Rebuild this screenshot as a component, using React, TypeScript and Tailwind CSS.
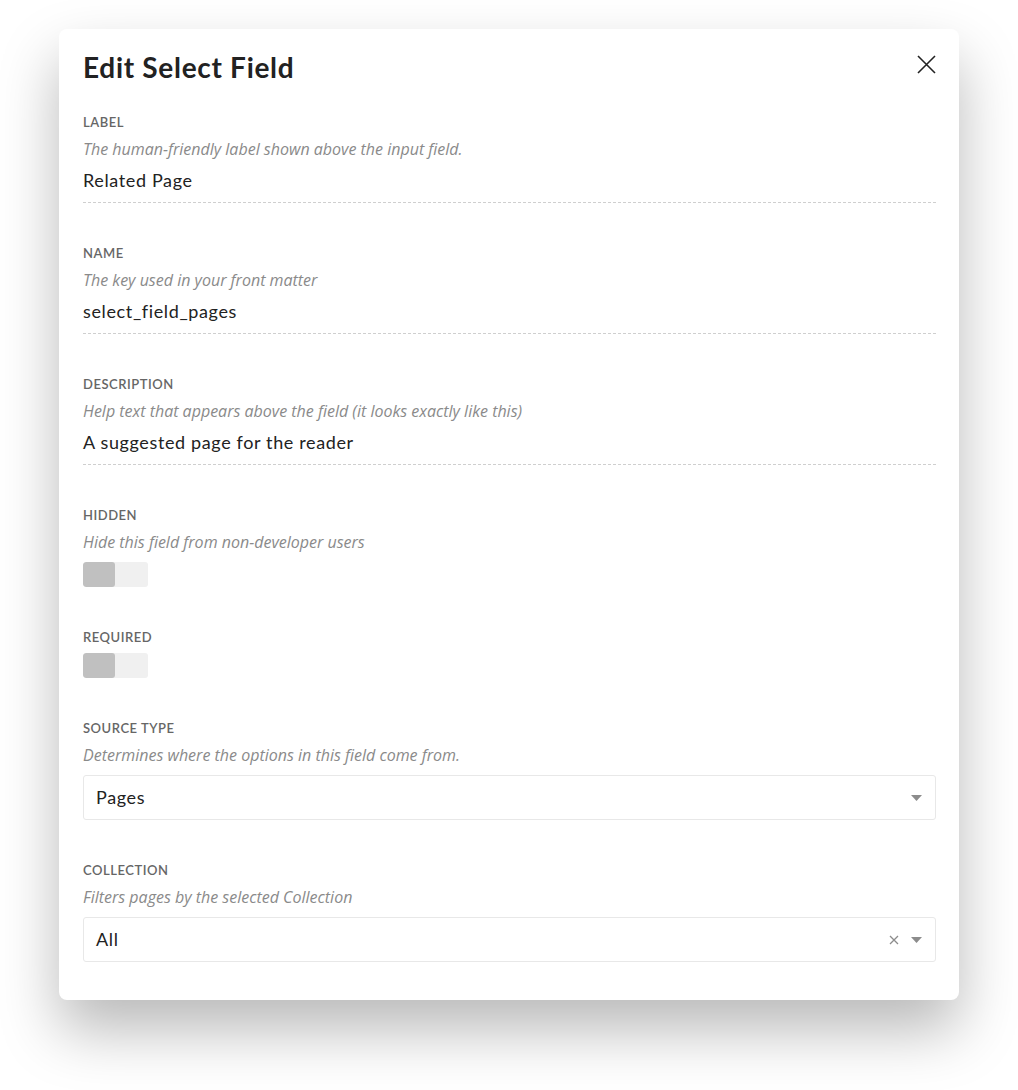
const font = { fontFamily: 'Lato, "Noto Sans", sans-serif' };
const hintFont = { fontFamily: '"Open Sans", "Noto Sans", sans-serif' };

function Label({ children }: { children: string }) {
  return <div className="text-[13px] leading-4 font-semibold tracking-[0.04em] text-[#666]">{children}</div>;
}

function Hint({ children }: { children: string }) {
  return (
    <div className="mt-[9px] text-[16px] leading-5 italic text-[#8a8a8a]" style={hintFont}>
      {children}
    </div>
  );
}

function TextField({ label, hint, value }: { label: string; hint: string; value: string }) {
  return (
    <div className="mt-[42px] first:mt-0">
      <Label>{label}</Label>
      <Hint>{hint}</Hint>
      <div className="mt-[9px] pb-[10px] border-b border-dashed border-[#cfcfcf] text-[18px] leading-6 tracking-[0.035em] text-[#222]">
        {value}
      </div>
    </div>
  );
}

function Toggle() {
  return (
    <div className="flex w-[65px] h-[25px] rounded-[3px] bg-[#f0f0f0] overflow-hidden">
      <div className="w-[32px] h-full rounded-[3px] bg-[#c0c0c0]" />
    </div>
  );
}

function Caret() {
  return (
    <svg width="11" height="6" viewBox="0 0 11 6">
      <path d="M0 0h11L5.5 6z" fill="#8c8c8c" />
    </svg>
  );
}

function Select({ value, clearable }: { value: string; clearable?: boolean }) {
  return (
    <div className="mt-[10px] h-[45px] flex items-center border border-[#e8e8e8] rounded-[3px] pl-3 pr-[13px]">
      <span className="flex-1 text-[18px] tracking-[0.035em] text-[#222]">{value}</span>
      {clearable && (
        <svg width="10" height="10" viewBox="0 0 10 10" className="mr-[12px]">
          <path d="M1 1l8 8M9 1l-8 8" stroke="#8c8c8c" strokeWidth="1.3" />
        </svg>
      )}
      <Caret />
    </div>
  );
}

export default function App() {
  return (
    <div className="min-h-[1090px] bg-white pt-[29px]" style={font}>
      <div className="mx-auto w-[900px] bg-white rounded-[8px] shadow-[0_30px_60px_rgba(0,0,0,0.28)] pl-6 pr-[23px] pt-5 pb-[38px]">
        <div className="flex items-start justify-between">
          <h1 className="text-[28px] leading-9 font-bold tracking-[0.025em] text-[#222]">Edit Select Field</h1>
          <button className="mt-[6px] w-[19px] h-[19px] flex items-center justify-center">
            <svg width="19" height="19" viewBox="0 0 19 19">
              <path d="M1 1l17 17M18 1L1 18" stroke="#222" strokeWidth="1.6" />
            </svg>
          </button>
        </div>

        <div className="mt-[29px]">
          <TextField label="LABEL" hint="The human-friendly label shown above the input field." value="Related Page" />
          <TextField label="NAME" hint="The key used in your front matter" value="select_field_pages" />
          <TextField
            label="DESCRIPTION"
            hint="Help text that appears above the field (it looks exactly like this)"
            value="A suggested page for the reader"
          />

          <div className="mt-[42px]">
            <Label>HIDDEN</Label>
            <Hint>Hide this field from non-developer users</Hint>
            <div className="mt-[10px]">
              <Toggle />
            </div>
          </div>

          <div className="mt-[42px]">
            <Label>REQUIRED</Label>
            <div className="mt-[8px]">
              <Toggle />
            </div>
          </div>

          <div className="mt-[42px]">
            <Label>SOURCE TYPE</Label>
            <Hint>Determines where the options in this field come from.</Hint>
            <Select value="Pages" />
          </div>

          <div className="mt-[42px]">
            <Label>COLLECTION</Label>
            <Hint>Filters pages by the selected Collection</Hint>
            <Select value="All" clearable />
          </div>
        </div>
      </div>
    </div>
  );
}
